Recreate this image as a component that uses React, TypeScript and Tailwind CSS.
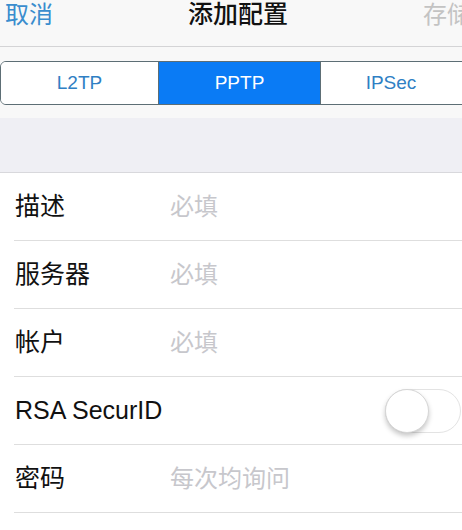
const FONT = { fontFamily: '"Liberation Sans", "Noto Sans CJK SC", sans-serif' };

const rows = [
  { label: '描述', placeholder: '必填' },
  { label: '服务器', placeholder: '必填' },
  { label: '帐户', placeholder: '必填' },
  { label: 'RSA SecurID', toggle: true },
  { label: '密码', placeholder: '每次均询问' },
];

function Toggle() {
  return (
    <div className="relative w-[76px] h-[44px] rounded-full border-[1.5px] border-[#e3e3e3] bg-white">
      <div className="absolute -left-[1px] -top-[1px] w-[44px] h-[44px] rounded-full bg-white border border-[#d6d6d6] shadow-[0_3px_5px_rgba(0,0,0,0.22)]" />
    </div>
  );
}

export default function App() {
  return (
    <div className="w-[462px] h-[530px] overflow-hidden bg-white" style={FONT}>
      {/* Header */}
      <div className="bg-[#f8f8f8] h-[118px]">
        <div className="relative h-[47px] border-b border-[#d4d4d6]">
          <div className="flex items-center h-[30px]">
            <span className="pl-[5px] text-[24px] text-[#3a8dce]">取消</span>
          </div>
          <div className="absolute left-0 right-0 top-0 h-[30px] flex items-center justify-center">
            <span className="text-[25px] font-medium text-[#111] pl-[14px]">添加配置</span>
          </div>
          <div className="absolute left-[423px] top-0 h-[30px] flex items-center whitespace-nowrap">
            <span className="text-[24px] text-[#c3c3c3]">存储</span>
          </div>
        </div>
        <div className="pt-[14px]">
          <div className="flex w-[482px] h-[44px] rounded-[6px] border-[1.5px] border-[#5d6e75] overflow-hidden text-[19px]">
            <div className="w-[157px] flex items-center justify-center text-[#2f7fc4] bg-white">L2TP</div>
            <div className="w-[162px] flex items-center justify-center text-white bg-[#0a7bf5] border-l-[1.5px] border-[#5d6e75]">PPTP</div>
            <div className="flex-1 flex items-center justify-center text-[#2f7fc4] bg-white border-l-[1.5px] border-[#5d6e75] pr-[20px]">IPSec</div>
          </div>
        </div>
      </div>

      {/* Section gap */}
      <div className="h-[55px] bg-[#efeff4] border-b border-[#d8d8dc]" />

      {/* Rows */}
      <div className="bg-white">
        {rows.map((r) => (
          <div key={r.label} className="pl-[14px]">
            <div className="flex items-center h-[68px] border-b-[1.5px] border-[#dedede] pr-[1px]">
              <span className="w-[156px] pl-[1px] text-[25px] text-[#111] whitespace-nowrap">{r.label}</span>
              {r.placeholder && <span className="text-[24px] text-[#c7c7cc]">{r.placeholder}</span>}
              {r.toggle && (
                <div className="ml-auto">
                  <Toggle />
                </div>
              )}
            </div>
          </div>
        ))}
        <div className="h-[68px]" />
      </div>
    </div>
  );
}
